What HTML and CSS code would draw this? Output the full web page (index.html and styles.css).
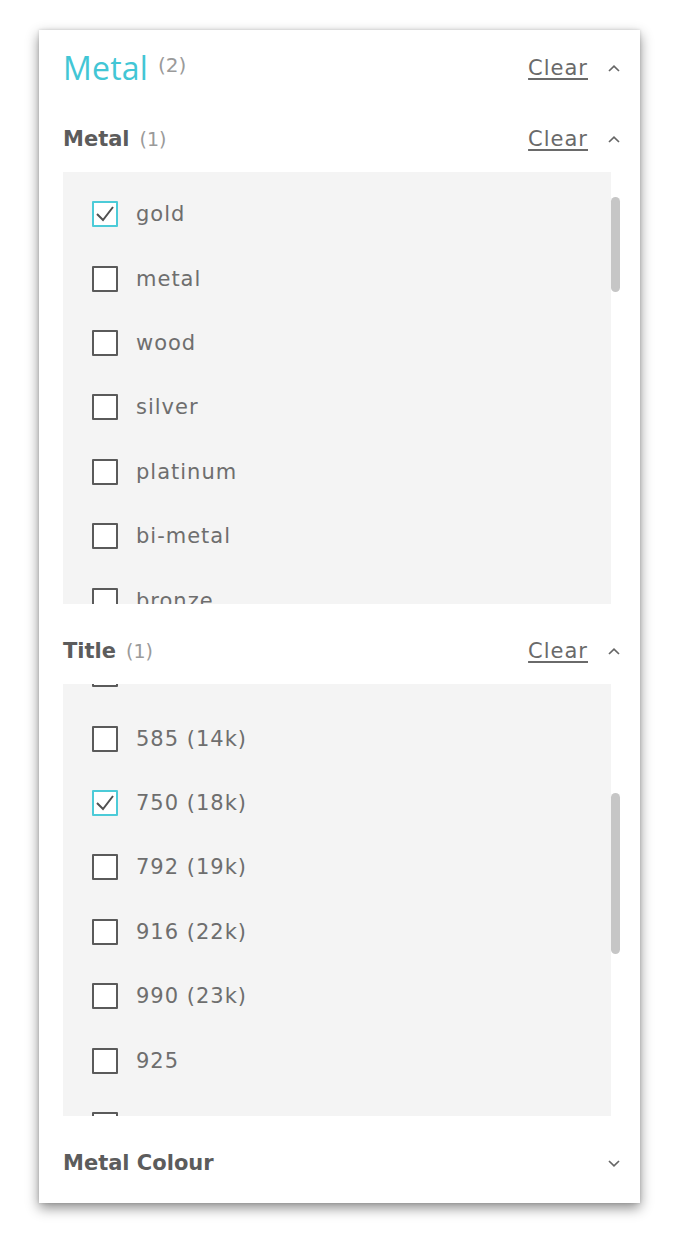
FILE: index.html
```html
<!DOCTYPE html>
<html lang="en">
<head>
<meta charset="utf-8">
<title>Metal filter</title>
<link rel="stylesheet" href="styles.css">
</head>
<body>
<div class="card">
  <div class="top-head">
    <div class="title-group">
      <span class="top-title">Metal</span><span class="top-count">(2)</span>
    </div>
    <div class="actions">
      <a class="clear" href="#">Clear</a>
      <svg class="chev" width="12" height="7" viewBox="0 0 12 7"><polyline points="1,6 6,1.2 11,6" fill="none" stroke="#666" stroke-width="1.7"/></svg>
    </div>
  </div>

  <div class="sub-head">
    <div class="title-group">
      <span class="sub-title">Metal</span><span class="sub-count">(1)</span>
    </div>
    <div class="actions">
      <a class="clear" href="#">Clear</a>
      <svg class="chev" width="12" height="7" viewBox="0 0 12 7"><polyline points="1,6 6,1.2 11,6" fill="none" stroke="#666" stroke-width="1.7"/></svg>
    </div>
  </div>
  <div class="scroll-area">
    <div class="list">
      <div class="list-inner first">
        <div class="row"><span class="box checked"><svg width="22" height="22" viewBox="0 0 22 22"><polyline points="3,11 9,17 19,4" fill="none" stroke="#505050" stroke-width="2"/></svg></span><span class="label">gold</span></div>
        <div class="row"><span class="box"></span><span class="label">metal</span></div>
        <div class="row"><span class="box"></span><span class="label">wood</span></div>
        <div class="row"><span class="box"></span><span class="label">silver</span></div>
        <div class="row"><span class="box"></span><span class="label">platinum</span></div>
        <div class="row"><span class="box"></span><span class="label">bi-metal</span></div>
        <div class="row"><span class="box"></span><span class="label">bronze</span></div>
      </div>
    </div>
    <div class="track"><div class="thumb thumb-a"></div></div>
  </div>

  <div class="sub-head spaced">
    <div class="title-group">
      <span class="sub-title">Title</span><span class="sub-count">(1)</span>
    </div>
    <div class="actions">
      <a class="clear" href="#">Clear</a>
      <svg class="chev" width="12" height="7" viewBox="0 0 12 7"><polyline points="1,6 6,1.2 11,6" fill="none" stroke="#666" stroke-width="1.7"/></svg>
    </div>
  </div>
  <div class="scroll-area">
    <div class="list">
      <div class="list-inner scrolled">
        <div class="row"><span class="box"></span><span class="label">500 (12k)</span></div>
        <div class="row"><span class="box"></span><span class="label">585 (14k)</span></div>
        <div class="row"><span class="box checked"><svg width="22" height="22" viewBox="0 0 22 22"><polyline points="3,11 9,17 19,4" fill="none" stroke="#505050" stroke-width="2"/></svg></span><span class="label">750 (18k)</span></div>
        <div class="row"><span class="box"></span><span class="label">792 (19k)</span></div>
        <div class="row"><span class="box"></span><span class="label">916 (22k)</span></div>
        <div class="row"><span class="box"></span><span class="label">990 (23k)</span></div>
        <div class="row"><span class="box"></span><span class="label">925</span></div>
        <div class="row"><span class="box"></span><span class="label">999</span></div>
      </div>
    </div>
    <div class="track"><div class="thumb thumb-b"></div></div>
  </div>

  <div class="sub-head spaced last">
    <div class="title-group">
      <span class="sub-title">Metal Colour</span>
    </div>
    <div class="actions">
      <svg class="chev" width="12" height="7" viewBox="0 0 12 7"><polyline points="1,1 6,5.8 11,1" fill="none" stroke="#666" stroke-width="1.7"/></svg>
    </div>
  </div>
</div>
</body>
</html>
```

FILE: styles.css
```css
html, body {
  margin: 0;
  padding: 0;
  background: #ffffff;
}

body {
  font-family: "DejaVu Sans", "Liberation Sans", sans-serif;
  padding-bottom: 30px;
}

.card {
  box-sizing: border-box;
  width: 601px;
  margin: 30px 0 0 39px;
  padding: 0 20px 7px 24px;
  background: #fff;
  box-shadow: 0 5px 12px rgba(0, 0, 0, 0.45), 0 0 3px rgba(0, 0, 0, 0.15);
}

.top-head {
  height: 76px;
  display: flex;
  align-items: center;
  justify-content: space-between;
}

.title-group {
  display: flex;
  align-items: center;
}

.top-title {
  font-family: "Open Sans", "DejaVu Sans", sans-serif;
  font-weight: 400;
  font-size: 32px;
  color: #42c6d5;
  letter-spacing: 0.2px;
  line-height: 1;
}

.top-count {
  margin-left: 10px;
  font-size: 20px;
  color: #9a9a9a;
  margin-top: -6px;
}

.actions {
  display: flex;
  align-items: center;
  gap: 20px;
}

.clear {
  font-size: 21px;
  letter-spacing: 1px;
  color: #6a6a6a;
  text-decoration: underline;
  text-decoration-thickness: 2px;
  text-underline-offset: 3px;
}

.chev {
  display: block;
}

.sub-head {
  height: 66px;
  display: flex;
  align-items: center;
  justify-content: space-between;
}

.sub-head.spaced {
  margin-top: 14px;
}

.sub-title {
  font-weight: bold;
  font-size: 21px;
  color: #5c5c5c;
}

.sub-count {
  margin-left: 10px;
  font-size: 19px;
  color: #9a9a9a;
}

.scroll-area {
  display: flex;
  height: 432px;
}

.list {
  flex: 1;
  background: #f4f4f4;
  overflow: hidden;
}

.list-inner.first {
  padding-top: 10px;
}

.list-inner.scrolled {
  margin-top: -42px;
}

.row {
  height: 64.4px;
  display: flex;
  align-items: center;
  padding-left: 29px;
}

.box {
  box-sizing: border-box;
  width: 26px;
  height: 26px;
  border: 2px solid #5a5a5a;
  border-radius: 1px;
  background: #fff;
  flex: none;
  display: flex;
  align-items: center;
  justify-content: center;
}

.box.checked {
  border-color: #4ccbd8;
}

.box svg {
  display: block;
}

.label {
  margin-left: 18px;
  font-size: 21px;
  letter-spacing: 1px;
  color: #6e6e6e;
}

.track {
  width: 9px;
  flex: none;
}

.thumb {
  width: 9px;
  background: #c6c6c6;
  border-radius: 4.5px;
}

.thumb-a {
  margin-top: 25px;
  height: 95px;
}

.thumb-b {
  margin-top: 109px;
  height: 161px;
}
```
